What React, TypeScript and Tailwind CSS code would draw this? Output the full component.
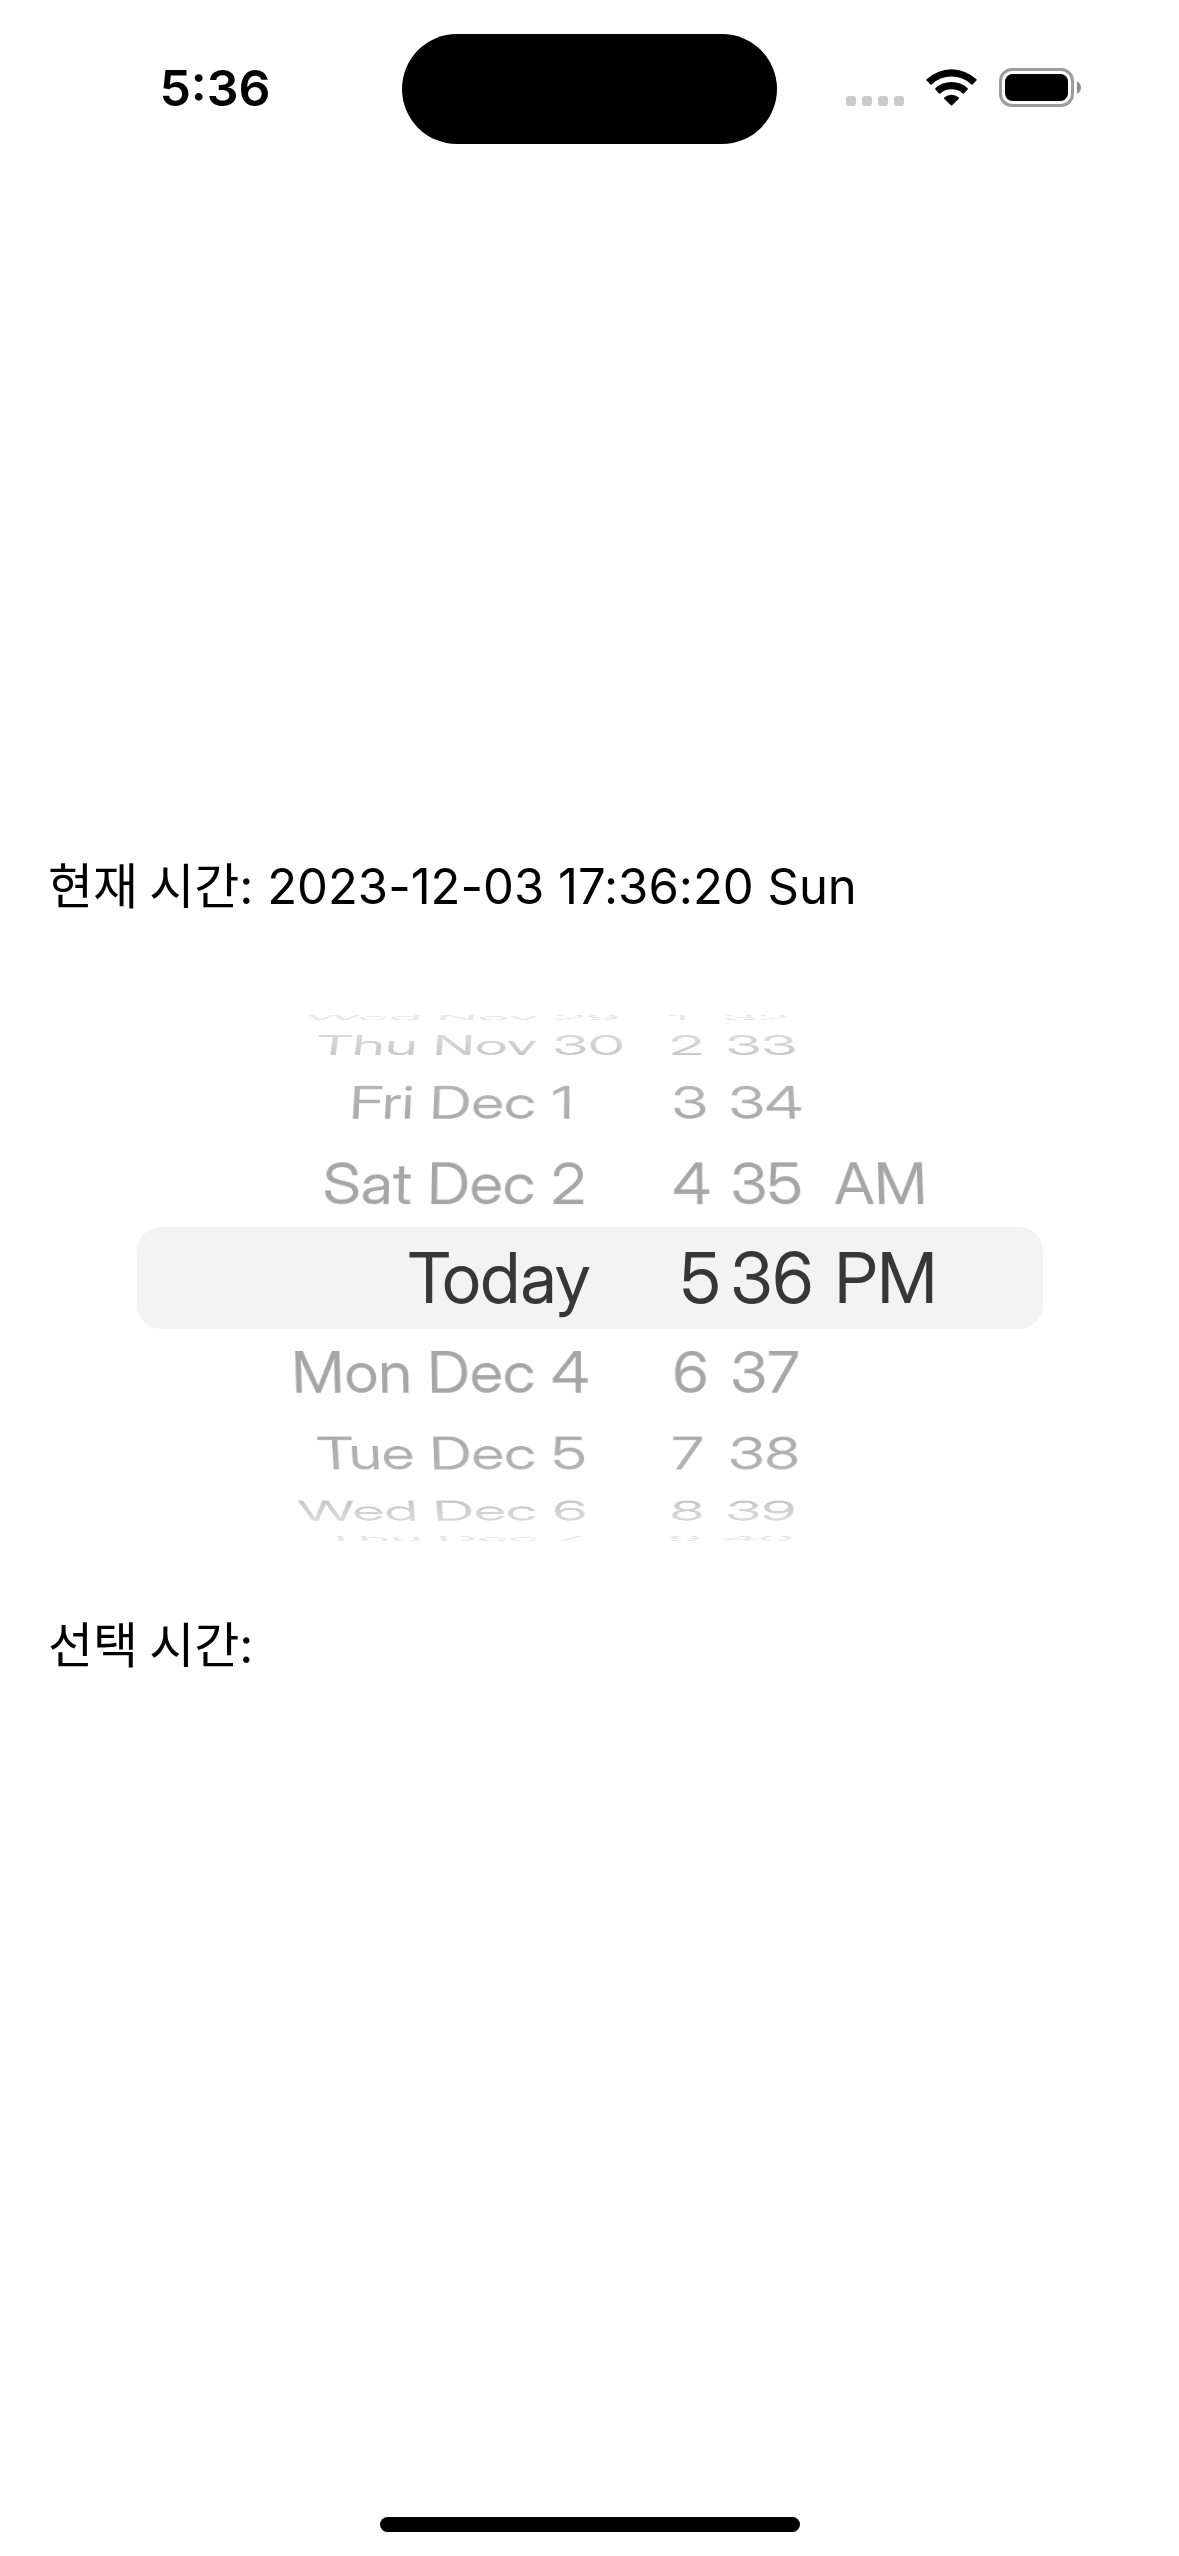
import React from 'react';

const STEP = 19.5;
const RADIUS = 284;

type WheelProps = {
  label: string;
  items: string[];
  selected: number;
  className: string;
  selectedClassName?: string;
};

const StatusBar: React.FC = () => (
  <header className="grid h-[178px] grid-cols-[1fr_375px_1fr] items-center">
    <div className="flex justify-center pb-0.5 pl-7">
      <time className="text-[50px] leading-[60px] font-semibold">5:36</time>
    </div>
    <div className="h-[110px] rounded-full bg-black"></div>
    <div className="flex items-center gap-[22px] pl-[69px]">
      <svg width="58" height="40" viewBox="0 0 58 40" fill="#cbcbcb" aria-label="No signal">
        <rect x="0" y="27" width="10" height="10" rx="3" />
        <rect x="16" y="27" width="10" height="10" rx="3" />
        <rect x="32" y="27" width="10" height="10" rx="3" />
        <rect x="48" y="27" width="10" height="10" rx="3" />
      </svg>
      <svg width="51" height="40" viewBox="0 0 51 40" aria-label="Wi-Fi">
        <path d="M0.6 11.6 Q0 11 0.6 10.3 A36 36 0 0 1 50.4 10.3 Q51 11 50.4 11.6 L46.6 15.4 Q46 15.9 45.4 15.4 A29 29 0 0 0 5.6 15.4 Q5 15.9 4.4 15.4 Z" />
        <path d="M9.3 20.6 Q8.8 20 9.3 19.4 A23.5 23.5 0 0 1 41.7 19.4 Q42.2 20 41.7 20.6 L37.9 24.4 Q37.3 24.9 36.7 24.4 A17 17 0 0 0 14.3 24.4 Q13.7 24.9 13.1 24.4 Z" />
        <path d="M18.2 29.7 Q17.7 29.1 18.3 28.5 A11 11 0 0 1 32.7 28.5 Q33.3 29.1 32.8 29.7 L26.2 36.3 Q25.5 36.9 24.8 36.3 Z" />
      </svg>
      <svg width="83" height="42" viewBox="0 0 83 42" aria-label="Battery full">
        <rect x="1.5" y="1.5" width="72" height="36" rx="11.5" fill="none" stroke="#9c9c9c" strokeWidth="3" />
        <rect x="6" y="6" width="63" height="27" rx="7.5" />
        <path d="M78 13.2 C80.6 14.5 82 16.9 82 19.5 C82 22.1 80.6 24.5 78 25.8 Z" fill="#8c8c8c" />
      </svg>
    </div>
  </header>
);

const Wheel: React.FC<WheelProps> = ({ label, items, selected, className, selectedClassName = '' }) => (
  <ul role="listbox" aria-label={label} className={`grid items-center transform-3d ${className}`}>
    {items.map((item, index) => {
      const offset = index - selected;

      if (offset === 0) {
        return (
          <li
            key={item}
            role="option"
            aria-selected="true"
            className={`col-start-1 row-start-1 text-[70px] leading-[84px] text-[#373737] ${selectedClassName}`}
          >
            {item}
          </li>
        );
      }

      // "Sat Dec 2" keeps its day number in a column wide enough for two digits
      const day = item.match(/^(\D+) (\d+)$/);

      return (
        <li
          key={item}
          role="option"
          aria-selected="false"
          className="col-start-1 row-start-1 flex justify-between text-[62px] leading-[74px] text-[#a6a6a6]"
          style={{
            transform: `translateZ(${-RADIUS}px) rotateX(${-offset * STEP}deg) translateZ(${RADIUS}px)`,
          }}
        >
          {day ? (
            <>
              <span className="flex-1 pr-4 text-right">{day[1]}</span>
              <span className="w-[72px]">{day[2]}</span>
            </>
          ) : (
            item
          )}
        </li>
      );
    })}
  </ul>
);

const DatePicker: React.FC = () => {
  const dates = [
    'Wed Nov 29',
    'Thu Nov 30',
    'Fri Dec 1',
    'Sat Dec 2',
    'Today',
    'Mon Dec 4',
    'Tue Dec 5',
    'Wed Dec 6',
    'Thu Dec 7',
  ];
  const hours = ['1', '2', '3', '4', '5', '6', '7', '8', '9'];
  const minutes = ['32', '33', '34', '35', '36', '37', '38', '39', '40'];

  return (
    <div className="grid h-[530px] items-center justify-items-center font-['Inter_Display','Inter',sans-serif]">
      <div className="col-start-1 row-start-1 h-[102px] w-full max-w-[906px] rounded-3xl bg-[#f3f3f3]"></div>
      <div className="col-start-1 row-start-1 flex h-[530px] w-full justify-center overflow-hidden perspective-[3400px] [mask-image:linear-gradient(to_bottom,rgb(0_0_0/0.22)_0px,rgb(0_0_0/0.42)_22px,rgb(0_0_0/0.62)_42px,rgb(0_0_0/0.84)_73px,rgb(0_0_0/0.94)_106px,black_140px,black_390px,rgb(0_0_0/0.94)_424px,rgb(0_0_0/0.84)_457px,rgb(0_0_0/0.62)_488px,rgb(0_0_0/0.42)_508px,rgb(0_0_0/0.22)_530px)]">
        <Wheel label="Date" items={dates} selected={4} className="w-[486px]" selectedClassName="pr-8 text-right" />
        <Wheel label="Hour" items={hours} selected={4} className="ml-[50px] w-[58px]" selectedClassName="pl-2" />
        <Wheel label="Minute" items={minutes} selected={4} className="w-[104px]" />
        <Wheel label="AM or PM" items={['AM', 'PM']} selected={1} className="w-[208px]" />
      </div>
    </div>
  );
};

const App: React.FC = () => {
  return (
    <div className="flex min-h-screen flex-col bg-white font-['Inter','Noto_Sans_CJK_KR',sans-serif] text-black">
      <StatusBar />

      <main className="flex flex-1 flex-col justify-center">
        <p className="px-12 text-[49px] leading-[60px]">
          <span className="font-['Noto_Sans_CJK_KR',sans-serif]">현재 시간</span>: 2023-12-03 17:36:20 Sun
        </p>
        <div className="mt-24 mb-[69px]">
          <DatePicker />
        </div>
        <p className="px-12 text-[49px] leading-[60px]">
          <span className="font-['Noto_Sans_CJK_KR',sans-serif]">선택 시간</span>:
        </p>
      </main>

      {/* Home indicator */}
      <footer className="flex h-[206px] items-end justify-center pb-6">
        <div className="h-[15px] w-[420px] rounded-full bg-black"></div>
      </footer>
    </div>
  );
};

export default App;
